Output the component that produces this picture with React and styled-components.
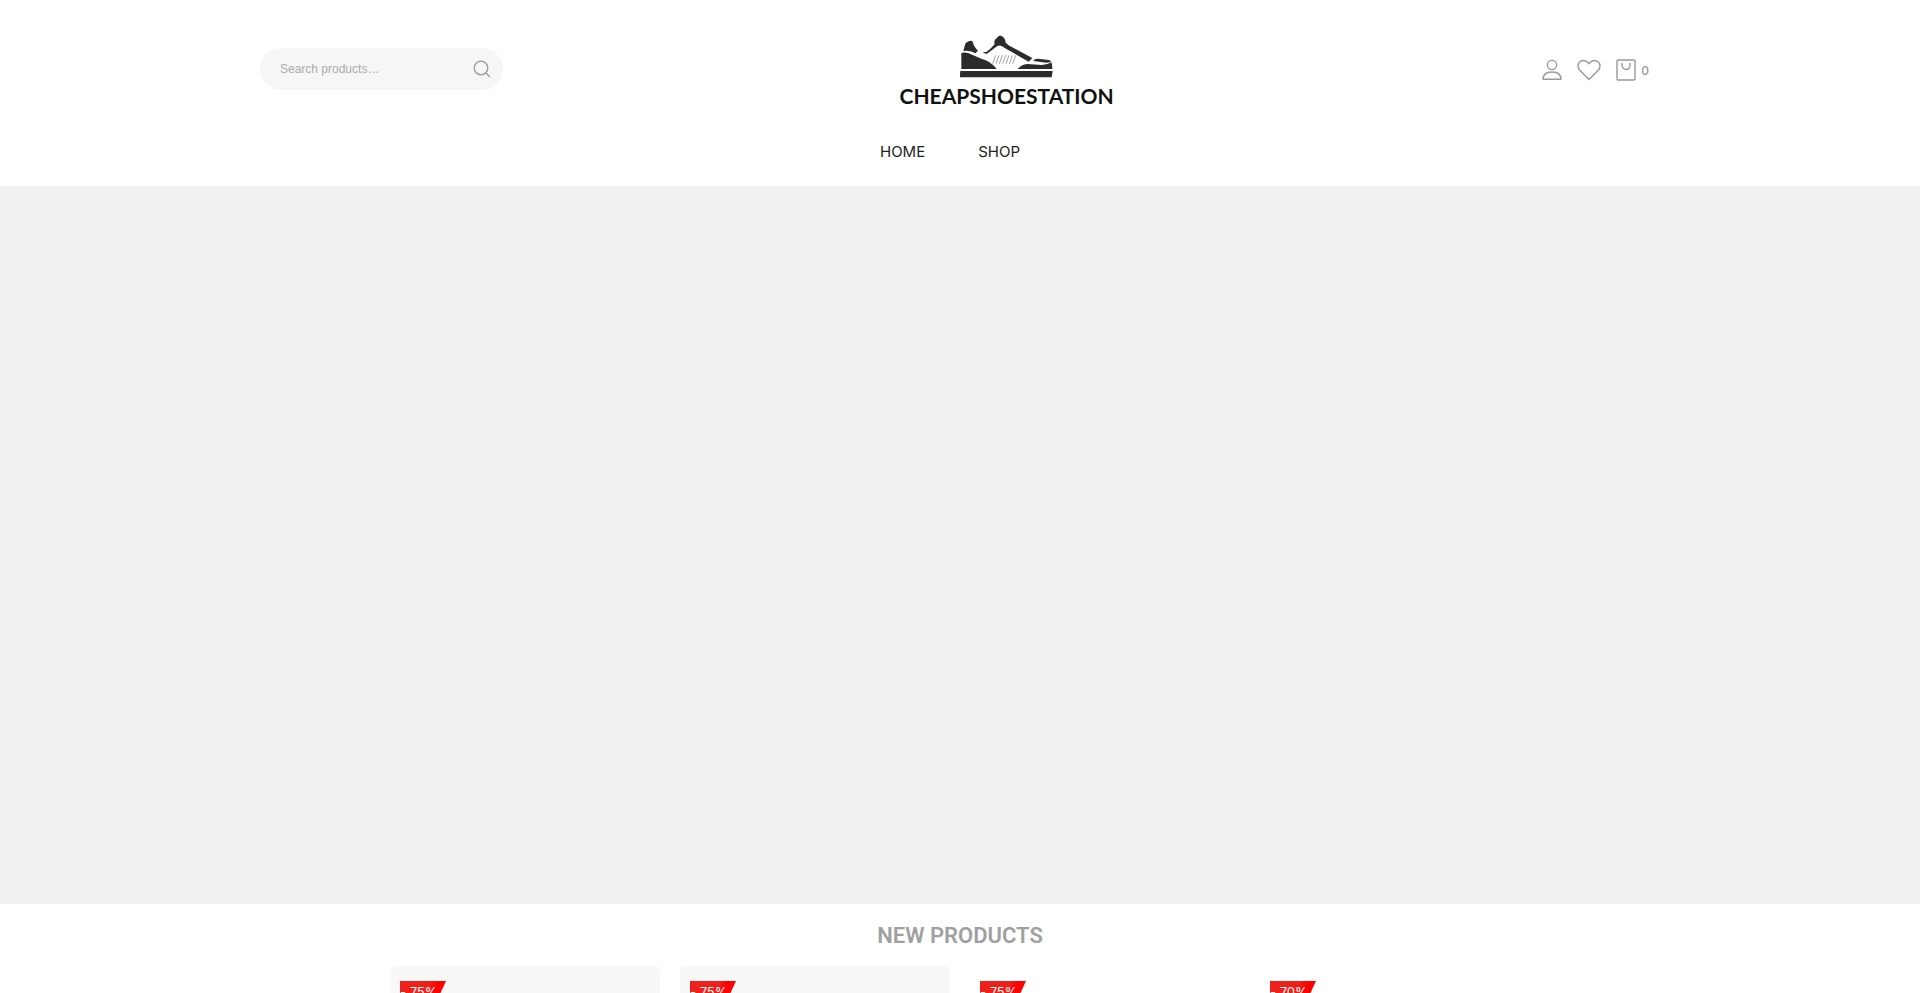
import React, { useState } from 'react';
import styled, { createGlobalStyle } from 'styled-components';

const products = [
    { id: 1, discount: '- 75%', tinted: true },
    { id: 2, discount: '- 75%', tinted: true },
    { id: 3, discount: '- 75%', tinted: false },
    { id: 4, discount: '- 70%', tinted: false },
];

const ShoeIcon = () => (
    <svg width="94" height="44" viewBox="56 18 282 132" fill="#2b2b2a" aria-hidden="true">
        <path d="M66 69 L70 54 Q72 43 79 42 Q86 35 93 40 Q97 44 96 49 Q101 60 110 68 L102 76 Q88 66 66 69Z" />
        <path d="M60 123 L60 75 Q70 71 82 76 L122 93 Q145 98 166 122 L164 123Z" />
        <path d="M124 71 L134 73 Q148 63 160 49 Q156 36 166 31 Q173 19 181 24 Q192 30 193 44 L204 53 L273 90 L262 101 L190 60 Q179 49 168 54 L136 78 Q129 77 124 71Z" />
        <path d="M276 99 Q279 91 291 92 L322 96 Q330 98 329 101 Q318 106 304 103Z" />
        <path d="M229 123 Q240 109 258 108 L301 111 Q318 111 330 103 Q334 112 333 123Z" />
        <path d="M57 129 H334 L331 148 H55Z" />
        <path
            d="M163 82 L154 107 M173 82 L164 107 M183 82 L174 107 M193 82 L184 107 M203 82 L194 107 M213 82 L204 107 M223 82 L214 107"
            fill="none"
            stroke="#6b6b6b"
            strokeWidth="2"
        />
    </svg>
);

const SearchIcon = () => (
    <svg width="18" height="18" viewBox="0 0 18 18" fill="none" stroke="#999" strokeWidth="1.3" aria-hidden="true">
        <circle cx="8" cy="8" r="6.8" />
        <path d="M13 13 L17 17" />
    </svg>
);

const UserIcon = () => (
    <svg width="20" height="22" viewBox="0 0 20 22" fill="none" stroke="#999" strokeWidth="1.4" aria-hidden="true">
        <circle cx="10" cy="6" r="4.6" />
        <path d="M1 20.3 Q1 13 10 13 Q19 13 19 20.3Z" strokeLinejoin="round" />
    </svg>
);

const HeartIcon = () => (
    <svg width="24" height="22" viewBox="0 0 24 22" fill="none" stroke="#999" strokeWidth="1.4" aria-hidden="true">
        <path
            d="M12 20.6 L2.8 11.2 C0.4 8.7 0.5 5.1 2.7 3 C5 0.8 8.5 1 10.7 3.3 L12 4.7 L13.3 3.3 C15.5 1 19 0.8 21.3 3 C23.5 5.1 23.6 8.7 21.2 11.2Z"
            strokeLinejoin="round"
        />
    </svg>
);

const BagIcon = () => (
    <svg width="20" height="22" viewBox="0 0 20 22" fill="none" stroke="#999" strokeWidth="1.4" aria-hidden="true">
        <rect x="1" y="1" width="18" height="20" rx="1" />
        <path d="M6 4 V6 C6 12 14 12 14 6 V4" />
    </svg>
);

const App = () => {
    const [query, setQuery] = useState('');

    return (
        <Page>
            <GlobalStyle />
            <Header>
                <TopBar>
                    <SearchForm role="search" onSubmit={(e) => e.preventDefault()}>
                        <SearchInput
                            type="text"
                            aria-label="Search products"
                            placeholder="Search products…"
                            value={query}
                            onChange={(e) => setQuery(e.target.value)}
                        />
                        <SearchButton type="submit" aria-label="Search">
                            <SearchIcon />
                        </SearchButton>
                    </SearchForm>

                    <Logo href="#home">
                        <ShoeIcon />
                        <LogoText>CHEAPSHOESTATION</LogoText>
                    </Logo>

                    <Actions>
                        <ActionLink href="#account" aria-label="My account">
                            <UserIcon />
                        </ActionLink>
                        <ActionLink href="#wishlist" aria-label="Wishlist">
                            <HeartIcon />
                        </ActionLink>
                        <ActionLink href="#cart" aria-label="Cart">
                            <BagIcon />
                            <CartCount>0</CartCount>
                        </ActionLink>
                    </Actions>
                </TopBar>

                <Nav>
                    <NavLink href="#home">HOME</NavLink>
                    <NavLink href="#shop">SHOP</NavLink>
                </Nav>
            </Header>

            <Banner />

            {/* New Products Section */}
            <Section>
                <SectionTitle>NEW PRODUCTS</SectionTitle>
                <ProductGrid>
                    {products.map((product) => (
                        <ProductCard key={product.id} $tinted={product.tinted}>
                            <Badge>{product.discount}</Badge>
                        </ProductCard>
                    ))}
                </ProductGrid>
            </Section>
        </Page>
    );
};

export default App;

// Styled Components
const GlobalStyle = createGlobalStyle`
    * {
        box-sizing: border-box;
    }

    body {
        margin: 0;
        background: #fff;
        font-family: Inter, sans-serif;
    }
`;

const Page = styled.div`
    height: 100vh;
    overflow: hidden;
`;

const Header = styled.header`
    padding: 30px 20px 20px;
`;

const TopBar = styled.div`
    display: flex;
    align-items: center;
    justify-content: space-between;
    max-width: 1400px;
    height: 78px;
    margin: 0 auto;
`;

const SearchForm = styled.form`
    display: flex;
    align-items: center;
    width: 243px;
    height: 42px;
    padding: 0 12px 0 20px;
    background: #f6f6f6;
    border-radius: 21px;
`;

const SearchInput = styled.input`
    flex: 1;
    min-width: 0;
    padding: 0;
    border: none;
    outline: none;
    background: transparent;
    color: #444;
    font-family: 'Liberation Sans', Arial, sans-serif;
    font-size: 12px;

    &::placeholder {
        color: #aaa;
    }
`;

const SearchButton = styled.button`
    display: flex;
    padding: 0;
    border: none;
    background: none;
    cursor: pointer;
`;

const Logo = styled.a`
    display: flex;
    flex-direction: column;
    align-items: center;
    gap: 6px;
    padding-top: 4px;
    color: #111;
    text-decoration: none;
`;

const LogoText = styled.span`
    font-family: Lato, sans-serif;
    font-size: 21px;
    font-weight: 700;
    line-height: 24px;
`;

const Actions = styled.div`
    display: flex;
    align-items: center;
    gap: 15px;
    padding: 2px 11px 0 32px;
`;

const ActionLink = styled.a`
    display: flex;
    align-items: center;
    gap: 5px;
    color: #999;
    text-decoration: none;
`;

const CartCount = styled.span`
    padding-top: 2px;
    font-size: 12px;
    font-weight: 500;
    line-height: 16px;
`;

const Nav = styled.nav`
    display: flex;
    justify-content: center;
    gap: 53px;
    padding: 36px 20px 6px 0;
`;

const NavLink = styled.a`
    color: #222;
    font-size: 15px;
    font-weight: 400;
    line-height: 16px;
    text-decoration: none;
`;

const Banner = styled.div`
    height: 718px;
    background: #f1f1f1;
`;

const Section = styled.section`
    max-width: 1180px;
    margin: 0 auto;
    padding: 16px 20px;
`;

const SectionTitle = styled.h2`
    margin: 0 0 14px;
    color: #a0a0a0;
    font-family: Roboto, sans-serif;
    font-size: 22px;
    font-weight: 600;
    line-height: 32px;
    text-align: center;
`;

const ProductGrid = styled.div`
    display: grid;
    grid-template-columns: repeat(4, 1fr);
    gap: 20px;
`;

const ProductCard = styled.article`
    aspect-ratio: 1;
    padding: 15px 10px;
    background: ${({ $tinted }) => ($tinted ? '#f8f8f8' : '#fff')};
    border-radius: 5px;
`;

const Badge = styled.span`
    display: block;
    width: 46px;
    height: 22px;
    color: #fff;
    background: linear-gradient(100deg, #ee2019 60%, #f00 75%);
    clip-path: polygon(0 0, 100% 0, 78% 100%, 0 100%);
    font-size: 13px;
    line-height: 22px;
`;
